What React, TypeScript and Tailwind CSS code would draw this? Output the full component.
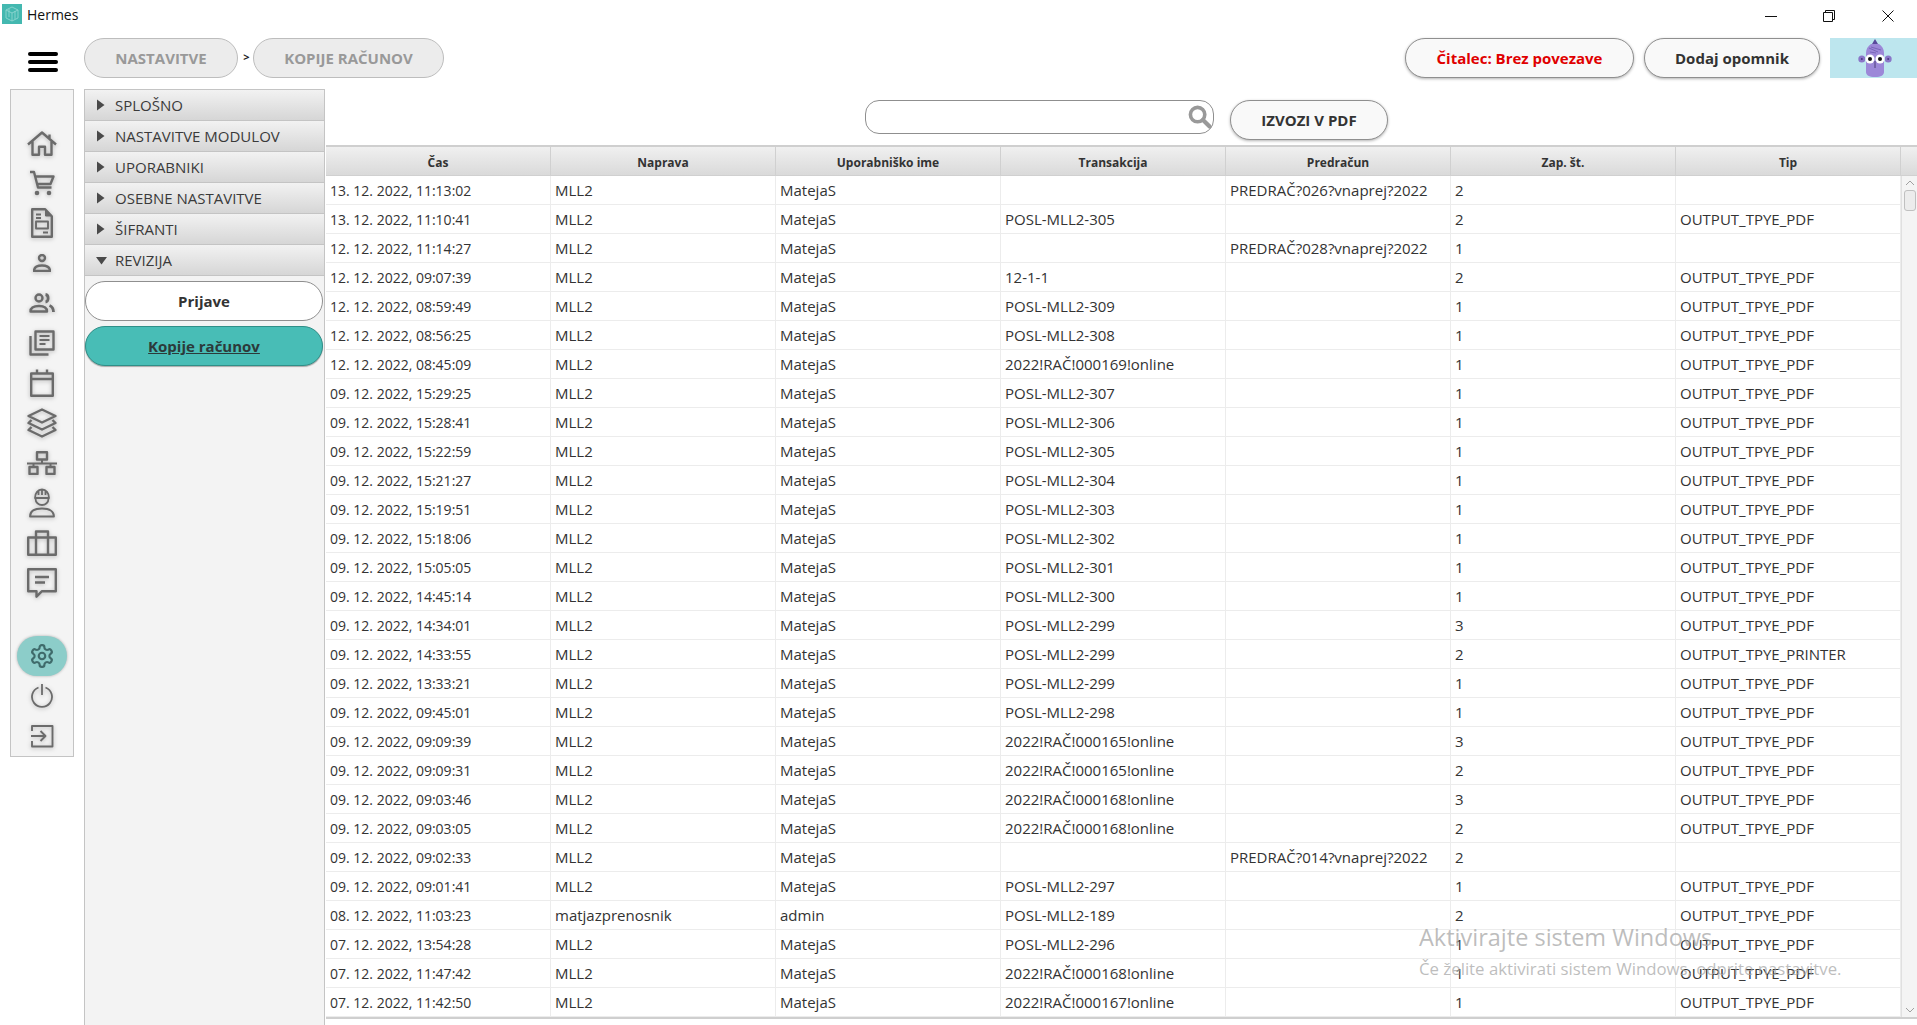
import { ReactNode } from 'react';

type LogRow = [string, string, string, string, string, string, string];

const PDF = 'OUTPUT_TPYE_PDF';

const rows: LogRow[] = [
  ['13. 12. 2022, 11:13:02', 'MLL2', 'MatejaS', '', 'PREDRAČ?026?vnaprej?2022', '2', ''],
  ['13. 12. 2022, 11:10:41', 'MLL2', 'MatejaS', 'POSL-MLL2-305', '', '2', PDF],
  ['12. 12. 2022, 11:14:27', 'MLL2', 'MatejaS', '', 'PREDRAČ?028?vnaprej?2022', '1', ''],
  ['12. 12. 2022, 09:07:39', 'MLL2', 'MatejaS', '12-1-1', '', '2', PDF],
  ['12. 12. 2022, 08:59:49', 'MLL2', 'MatejaS', 'POSL-MLL2-309', '', '1', PDF],
  ['12. 12. 2022, 08:56:25', 'MLL2', 'MatejaS', 'POSL-MLL2-308', '', '1', PDF],
  ['12. 12. 2022, 08:45:09', 'MLL2', 'MatejaS', '2022!RAČ!000169!online', '', '1', PDF],
  ['09. 12. 2022, 15:29:25', 'MLL2', 'MatejaS', 'POSL-MLL2-307', '', '1', PDF],
  ['09. 12. 2022, 15:28:41', 'MLL2', 'MatejaS', 'POSL-MLL2-306', '', '1', PDF],
  ['09. 12. 2022, 15:22:59', 'MLL2', 'MatejaS', 'POSL-MLL2-305', '', '1', PDF],
  ['09. 12. 2022, 15:21:27', 'MLL2', 'MatejaS', 'POSL-MLL2-304', '', '1', PDF],
  ['09. 12. 2022, 15:19:51', 'MLL2', 'MatejaS', 'POSL-MLL2-303', '', '1', PDF],
  ['09. 12. 2022, 15:18:06', 'MLL2', 'MatejaS', 'POSL-MLL2-302', '', '1', PDF],
  ['09. 12. 2022, 15:05:05', 'MLL2', 'MatejaS', 'POSL-MLL2-301', '', '1', PDF],
  ['09. 12. 2022, 14:45:14', 'MLL2', 'MatejaS', 'POSL-MLL2-300', '', '1', PDF],
  ['09. 12. 2022, 14:34:01', 'MLL2', 'MatejaS', 'POSL-MLL2-299', '', '3', PDF],
  ['09. 12. 2022, 14:33:55', 'MLL2', 'MatejaS', 'POSL-MLL2-299', '', '2', 'OUTPUT_TPYE_PRINTER'],
  ['09. 12. 2022, 13:33:21', 'MLL2', 'MatejaS', 'POSL-MLL2-299', '', '1', PDF],
  ['09. 12. 2022, 09:45:01', 'MLL2', 'MatejaS', 'POSL-MLL2-298', '', '1', PDF],
  ['09. 12. 2022, 09:09:39', 'MLL2', 'MatejaS', '2022!RAČ!000165!online', '', '3', PDF],
  ['09. 12. 2022, 09:09:31', 'MLL2', 'MatejaS', '2022!RAČ!000165!online', '', '2', PDF],
  ['09. 12. 2022, 09:03:46', 'MLL2', 'MatejaS', '2022!RAČ!000168!online', '', '3', PDF],
  ['09. 12. 2022, 09:03:05', 'MLL2', 'MatejaS', '2022!RAČ!000168!online', '', '2', PDF],
  ['09. 12. 2022, 09:02:33', 'MLL2', 'MatejaS', '', 'PREDRAČ?014?vnaprej?2022', '2', ''],
  ['09. 12. 2022, 09:01:41', 'MLL2', 'MatejaS', 'POSL-MLL2-297', '', '1', PDF],
  ['08. 12. 2022, 11:03:23', 'matjazprenosnik', 'admin', 'POSL-MLL2-189', '', '2', PDF],
  ['07. 12. 2022, 13:54:28', 'MLL2', 'MatejaS', 'POSL-MLL2-296', '', '1', PDF],
  ['07. 12. 2022, 11:47:42', 'MLL2', 'MatejaS', '2022!RAČ!000168!online', '', '1', PDF],
  ['07. 12. 2022, 11:42:50', 'MLL2', 'MatejaS', '2022!RAČ!000167!online', '', '1', PDF],
];

const columns = ['Čas', 'Naprava', 'Uporabniško ime', 'Transakcija', 'Predračun', 'Zap. št.', 'Tip'];
const sections = ['SPLOŠNO', 'NASTAVITVE MODULOV', 'UPORABNIKI', 'OSEBNE NASTAVITVE', 'ŠIFRANTI'];

function NavIcon({ w, h, children }: { w: number; h: number; children: ReactNode }) {
  return (
    <svg
      width={w}
      height={h}
      viewBox={`0 0 ${w} ${h}`}
      fill="none"
      stroke="#6b6b6b"
      strokeWidth="2.4"
      strokeLinejoin="round"
      className="drop-shadow-[0_1px_2px_rgba(0,0,0,0.25)]"
    >
      {children}
    </svg>
  );
}

function Slot({ children }: { children: ReactNode }) {
  return <div className="flex h-10 w-full items-center justify-center">{children}</div>;
}

function Sidebar() {
  return (
    <div className="flex h-[668px] w-[64px] flex-col items-center border border-[#c4c4c4] bg-[#f4f4f4] pt-[33px]">
      <Slot>
        <NavIcon w={30} h={25}>
          <path d="M1 13.500 15 1.500 29 13.500M5.500 10v13.800h6.500v-8h6v8h6.500V10M22.500 7V3.500" />
        </NavIcon>
      </Slot>
      <Slot>
        <NavIcon w={26} h={26}>
          <path d="M1 2h4l4 15.500h13.500M6 6.500h18.500L21.500 14H8" />
          <circle cx="8" cy="23" r="2.300" fill="#6b6b6b" stroke="none" />
          <circle cx="20" cy="23" r="2.300" fill="#6b6b6b" stroke="none" />
        </NavIcon>
      </Slot>
      <Slot>
        <NavIcon w={22} h={30}>
          <path d="M1.200 1.200h13l6.600 7v20.600H1.200z" />
          <path d="M14.500 1.500V8h6.300z" fill="#6b6b6b" strokeWidth="1" />
          <path d="M5 6.500h5M5 10h5M5 13.500h12v7H5zM12 24.500h5" strokeWidth="1.900" />
        </NavIcon>
      </Slot>
      <Slot>
        <NavIcon w={18} h={18}>
          <circle cx="9" cy="4" r="3" />
          <path d="M1 17c0-3.500 3-5.500 8-5.500s8 2 8 5.500z" />
        </NavIcon>
      </Slot>
      <Slot>
        <NavIcon w={26} h={20}>
          <circle cx="10" cy="5" r="3.500" />
          <path d="M1.500 18.500c0-3.500 3-5.500 8.500-5.500s8 2 8 5.500z" />
          <path d="M16.500 1.500c3.500.5 3.500 7 0 7.500" strokeWidth="2.800" />
          <path d="M20.500 12.500c2.500 1 4 3 4 6.500" strokeWidth="2.800" />
        </NavIcon>
      </Slot>
      <Slot>
        <NavIcon w={26} h={26}>
          <path d="M6.500 1.500h18v18h-18z" />
          <path d="M10.500 6h10M10.500 10h10M10.500 14h6" strokeWidth="2.200" />
          <path d="M1.500 6v18.500h18" />
        </NavIcon>
      </Slot>
      <Slot>
        <NavIcon w={24} h={28}>
          <path d="M1.200 4.500h21.600v22.300H1.200zM1.200 10h21.600M7 .5v4M17 .5v4" />
        </NavIcon>
      </Slot>
      <Slot>
        <NavIcon w={30} h={30}>
          <path d="M15 1.500 28.500 8 15 14.500 1.500 8z" />
          <path d="M4.500 12 1.500 15 15 21.500 28.500 15l-3-3" />
          <path d="M4.500 19 1.500 22 15 28.500 28.500 22l-3-3" />
        </NavIcon>
      </Slot>
      <Slot>
        <NavIcon w={30} h={24}>
          <path d="M10 1.200h10v7.300H10zM2.500 16h8v7h-8zM19.500 16h8v7h-8z" />
          <path d="M15 8.500V12M0 12.500h30M6.500 12.500V16M23.500 12.500V16" strokeWidth="2" />
        </NavIcon>
      </Slot>
      <Slot>
        <NavIcon w={26} h={30}>
          <path d="M6 10c0-5 3-8.500 7-8.500s7 3.500 7 8.500zM13 1.500V7M9.500 2.500V7M16.500 2.500V7" strokeWidth="1.800" />
          <path d="M6.500 10.500c0 4 3 6.500 6.500 6.500s6.500-2.500 6.500-6.500" strokeWidth="1.800" />
          <path d="M1 28.500c0-5 4-8 12-8s12 3 12 8z" strokeWidth="1.800" />
        </NavIcon>
      </Slot>
      <Slot>
        <NavIcon w={30} h={26}>
          <path d="M1.200 7.500h27.600v17.300H1.200zM9 7.500V1.500h12v6M9 7.500v17.300M21 7.500v17.300" />
        </NavIcon>
      </Slot>
      <Slot>
        <NavIcon w={30} h={30}>
          <path d="M1.200 1.200h27.600v22H15l-5.500 5.500v-5.500H1.200z" />
          <path d="M8 9h14M8 14.500h10" />
        </NavIcon>
      </Slot>
      <div className="mt-[33px] flex h-10 w-[50px] items-center justify-center rounded-[20px] bg-[#8ccdc9] shadow-[0_0_3px_rgba(0,0,0,0.3)]">
        <svg width="26" height="26" viewBox="0 0 24 24" fill="none" stroke="#3f6b6b" strokeWidth="2" strokeLinejoin="round">
          <path d="M12.220 2h-.440a2 2 0 0 0-2 2v.180a2 2 0 0 1-1 1.730l-.430.250a2 2 0 0 1-2 0l-.150-.080a2 2 0 0 0-2.730.730l-.220.380a2 2 0 0 0 .730 2.730l.150.100a2 2 0 0 1 1 1.720v.510a2 2 0 0 1-1 1.740l-.150.090a2 2 0 0 0-.730 2.730l.220.380a2 2 0 0 0 2.730.730l.150-.080a2 2 0 0 1 2 0l.430.250a2 2 0 0 1 1 1.730V20a2 2 0 0 0 2 2h.440a2 2 0 0 0 2-2v-.180a2 2 0 0 1 1-1.730l.430-.250a2 2 0 0 1 2 0l.150.080a2 2 0 0 0 2.730-.730l.220-.390a2 2 0 0 0-.730-2.730l-.150-.080a2 2 0 0 1-1-1.740v-.500a2 2 0 0 1 1-1.740l.150-.090a2 2 0 0 0 .730-2.730l-.220-.380a2 2 0 0 0-2.730-.730l-.150.080a2 2 0 0 1-2 0l-.430-.250a2 2 0 0 1-1-1.730V4a2 2 0 0 0-2-2z" />
          <circle cx="12" cy="12" r="3" />
        </svg>
      </div>
      <Slot>
        <NavIcon w={24} h={24}>
          <path d="M8.500 3.500a10 10 0 1 0 7 0M12 0v11" strokeWidth="1.800" />
        </NavIcon>
      </Slot>
      <Slot>
        <NavIcon w={24} h={24}>
          <path d="M2 7V2h20.500v20.500H2V17M1 12h14M10.500 7l5 5-5 5" strokeWidth="1.900" />
        </NavIcon>
      </Slot>
    </div>
  );
}

function Accordion() {
  return (
    <div className="flex w-[241px] flex-col border-x border-t border-[#c4c4c4] bg-[#f3f3f3]">
      {sections.map((title) => (
        <PaneTitle key={title} title={title} />
      ))}
      <PaneTitle title="REVIZIJA" open />
      <div className="flex flex-col gap-[5px] pt-[5px] pr-px">
        <button className="h-[40px] rounded-[20px] border border-[#8f8f8f] bg-white text-[15px] font-bold text-[#333]">
          Prijave
        </button>
        <button className="h-[40px] rounded-[20px] border border-[#2f8f88] bg-[#48bdb6] text-[15px] font-bold text-[#2c3a3a] underline shadow-[0_1px_1px_rgba(0,0,0,0.3)]">
          Kopije računov
        </button>
      </div>
    </div>
  );
}

function PaneTitle({ title, open }: { title: string; open?: boolean }) {
  return (
    <div className="flex h-[31px] shrink-0 items-center border-b border-[#c4c4c4] bg-gradient-to-b from-[#f2f2f2] to-[#d6d6d6] pl-[11px] text-[15px] text-[#3a3a3a]">
      <span className="flex w-[19px] shrink-0">
        {open ? (
          <svg width="12" height="9" viewBox="0 0 12 9">
            <path d="M0 1h11L5.500 8.500z" fill="#4a4a4a" />
          </svg>
        ) : (
          <svg width="9" height="12" viewBox="0 0 9 12">
            <path d="M1 0.500 8.500 6 1 11.500z" fill="#4a4a4a" />
          </svg>
        )}
      </span>
      {title}
    </div>
  );
}

function LogTable() {
  return (
    <div className="relative ml-px flex h-[874px] flex-col border-y-2 border-[#cfcfcf]">
      <div className="flex h-[29px] shrink-0 bg-gradient-to-b from-[#f0f0f0] to-[#d9d9d9]">
        <div className="grid grow grid-cols-[repeat(7,225px)]">
          {columns.map((c) => (
            <div
              key={c}
              className="flex items-center justify-center border-r border-b border-[#d0d0d0] pt-[3px] text-[12px] font-bold text-[#333]"
            >
              {c}
            </div>
          ))}
        </div>
        <div className="w-[16px] border-b border-[#d0d0d0]" />
      </div>
      <div className="flex grow">
        <div className="w-[1575px] shrink-0">
          {rows.map((row) => (
            <div key={row[0]} className="grid h-[29px] grid-cols-[repeat(7,225px)] border-b border-[#ececec]">
              {row.map((cell, i) => (
                <div
                  key={i}
                  className={
                    i === 0
                      ? 'flex items-center border-r border-[#ececec] pl-[4px] text-[14px] whitespace-nowrap text-[#333]'
                      : 'flex items-center border-r border-[#ececec] pl-[4px] text-[15px] whitespace-nowrap text-[#333]'
                  }
                >
                  {cell}
                </div>
              ))}
            </div>
          ))}
        </div>
        <Scrollbar />
      </div>
      <div className="pointer-events-none absolute top-[779px] left-[1093px] leading-none whitespace-nowrap text-[#a8a8a8]/75">
        <div className="text-[23.500px]">Aktivirajte sistem Windows</div>
        <div className="mt-[11px] text-[16.800px]">Če želite aktivirati sistem Windows, odprite nastavitve.</div>
      </div>
    </div>
  );
}

function Scrollbar() {
  return (
    <div className="flex grow flex-col items-center border-l border-[#e0e0e0] bg-[#f4f4f4] pt-[4px] pb-[4px]">
      <svg width="10" height="6" viewBox="0 0 10 6" fill="none" stroke="#a0a0a0">
        <path d="M1 5 5 1l4 4" />
      </svg>
      <div className="mt-[4px] h-[21px] w-[12px] rounded-[3px] border border-[#c0c0c0] bg-[#ececec]" />
      <svg className="mt-auto" width="10" height="6" viewBox="0 0 10 6" fill="none" stroke="#a0a0a0">
        <path d="M1 1l4 4 4-4" />
      </svg>
    </div>
  );
}

function Avatar() {
  return (
    <div className="flex h-[40px] w-[87px] items-center justify-center bg-[#bde6ee] pl-[3px]">
      <svg width="34" height="38" viewBox="0 0 34 38">
        <path d="M14 5 17 0 20 5z" fill="#5a4a9c" />
        <path d="M13 5H21C24 7 26 10 26 14V33C26 36 23 38 17 38S8 36 8 33V14C8 10 10 7 13 5z" fill="#9c88d8" />
        <circle cx="3.800" cy="20" r="3.500" fill="#8a76c8" />
        <circle cx="30.200" cy="20" r="3.500" fill="#8a76c8" />
        <circle cx="3.800" cy="20" r="1" fill="#4a3a80" />
        <circle cx="30.200" cy="20" r="1" fill="#4a3a80" />
        <path d="M11 9l9 4M13 8l10 3M12 13l6 1" stroke="#6f5cb0" strokeWidth="0.800" fill="none" />
        <circle cx="12" cy="20" r="4.500" fill="#fff" />
        <circle cx="22" cy="20" r="4.500" fill="#fff" />
        <circle cx="12" cy="20" r="2" fill="#111" />
        <circle cx="22" cy="20" r="2" fill="#111" />
        <path d="M17 22v7" stroke="#3a2f66" strokeWidth="0.800" />
      </svg>
    </div>
  );
}

export default function App() {
  return (
    <div className="flex h-[1025px] w-[1917px] flex-col overflow-hidden bg-white font-['Open_Sans',sans-serif] text-[#333]">
      {/* title bar */}
      <div className="flex h-[31px] shrink-0 items-center pl-[2px]">
        <svg width="20" height="20" viewBox="0 0 20 20" className="mt-[-3px] shrink-0">
          <rect width="20" height="20" fill="#44b8b0" />
          <path d="M10 3 16 6v8l-6 3-6-3V6zM4 6l6 3 6-3M10 9v8M7 5v8M13 7v8" fill="none" stroke="#8fd6d0" strokeWidth="0.900" />
        </svg>
        <span className="mt-[-2px] ml-[5px] text-[14px] text-[#111]">Hermes</span>
        <div className="ml-auto flex items-center">
          <svg width="12" height="12" viewBox="0 0 12 12" className="mr-[46px]" stroke="#111" fill="none">
            <path d="M0 6.500h12" />
          </svg>
          <svg width="12" height="12" viewBox="0 0 12 12" className="mr-[47px]" stroke="#111" fill="none">
            <path d="M.5 2.500h9v9h-9zM2.500 2.500V.5h9v9h-2" />
          </svg>
          <svg width="12" height="12" viewBox="0 0 12 12" className="mr-[23px]" stroke="#111" fill="none">
            <path d="M.5.5l11 11M11.500.5l-11 11" />
          </svg>
        </div>
      </div>

      {/* header */}
      <div className="flex h-[58px] shrink-0 pt-[7px]">
        <div className="flex h-[40px] w-[84px] shrink-0 items-center justify-center">
          <div className="mt-[8px] ml-[1px] flex h-[20px] w-[30px] flex-col justify-between">
            <span className="h-[4px] rounded-sm bg-black" />
            <span className="h-[4px] rounded-sm bg-black" />
            <span className="h-[4px] rounded-sm bg-black" />
          </div>
        </div>
        <div className="flex h-[40px] w-[154px] items-center justify-center rounded-[20px] border border-[#bdbdbd] bg-[#ececec] text-[15px] font-bold text-[#999]">
          NASTAVITVE
        </div>
        <span className="flex h-[38px] w-[15px] items-center justify-center pl-[2px] text-[11px] font-bold text-[#222]">&gt;</span>
        <div className="flex h-[40px] w-[191px] items-center justify-center rounded-[20px] border border-[#bdbdbd] bg-[#ececec] text-[15px] font-bold text-[#999]">
          KOPIJE RAČUNOV
        </div>
        <div className="ml-auto flex gap-[10px]">
          <button className="h-[40px] w-[229px] rounded-[20px] border border-[#8f8f8f] bg-[#f9f9f9] pt-px text-[15px] font-bold text-[#e00000] shadow-[0_1px_3px_rgba(0,0,0,0.3)]">
            Čitalec: Brez povezave
          </button>
          <button className="h-[40px] w-[176px] rounded-[20px] border border-[#8f8f8f] bg-[#f9f9f9] pt-px text-[15px] font-bold text-[#333] shadow-[0_1px_3px_rgba(0,0,0,0.3)]">
            Dodaj opomnik
          </button>
          <Avatar />
        </div>
      </div>

      {/* body */}
      <div className="flex grow">
        <div className="ml-[10px] w-[74px] shrink-0">
          <Sidebar />
        </div>
        <Accordion />
        <div className="flex grow flex-col">
          <div className="flex h-[56px] shrink-0 gap-[16px] pt-[11px] pl-[540px]">
            <div className="flex h-[34px] w-[349px] items-center justify-end rounded-[14px] border border-[#8f8f8f] bg-white pr-[1px]">
              <svg width="24" height="24" viewBox="0 0 20 20" fill="none">
                <circle cx="8" cy="8" r="6" stroke="#999" strokeWidth="3" />
                <path d="M12.500 12.500 18 18" stroke="#999" strokeWidth="3.500" strokeLinecap="round" />
              </svg>
            </div>
            <button className="h-[40px] w-[158px] rounded-[20px] border border-[#8f8f8f] bg-[#f9f9f9] text-[15px] font-bold text-[#333] shadow-[0_1px_3px_rgba(0,0,0,0.3)]">
              IZVOZI V PDF
            </button>
          </div>
          <LogTable />
        </div>
      </div>
    </div>
  );
}
